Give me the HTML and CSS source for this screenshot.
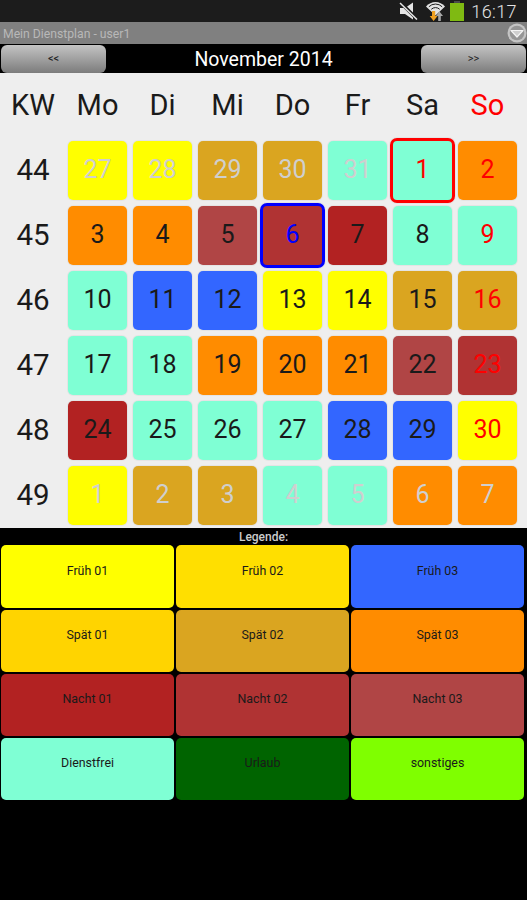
FILE: index.html
```html
<!DOCTYPE html>
<html lang="de">
<head>
  <meta charset="UTF-8" />
  <meta name="viewport" content="width=device-width, initial-scale=1.0"/>
  <title>Mein Dienstplan</title>
  <link rel="stylesheet" href="styles.css">
</head>
<body>
  <div class="container">
    <div class="status-bar">
      <svg class="icon-mute" width="20" height="18" viewBox="0 0 20 18">
        <path d="M1 6h5l8-5.500v17L6 12H1z" fill="#e6e6e6"/>
        <path d="M1 0l18 18" stroke="#1c1c1c" stroke-width="3.400"/>
        <path d="M1 1l17 16.500" stroke="#e6e6e6" stroke-width="1.500"/>
      </svg>
      <svg class="icon-wifi" width="19" height="20" viewBox="0 0 19 20">
        <path d="M0 5.500C5 -.5 14 -.5 19 5.500l-9.500 9z" fill="#e4e4e4"/>
        <path d="M2.800 5.800a9.500 9.500 0 0 1 13.400 0M5.300 8.300a6 6 0 0 1 8.400 0" fill="none" stroke="#1c1c1c" stroke-width="1"/>
        <path d="M6 10h3.200v5h2.300L7.600 20 3.700 15H6z" fill="#f0a020"/>
        <path d="M13.500 10.500l3.500 4.500h-2.200v5h-2.600v-5H10z" fill="#a8a8a8"/>
      </svg>
      <div class="battery"></div>
      <span class="clock">16:17</span>
    </div>

    <div class="title-bar">
      <span class="app-title">Mein Dienstplan - user1</span>
      <svg class="icon-menu" width="20" height="20" viewBox="0 0 20 20">
        <circle cx="10" cy="10" r="9.500" fill="#c4c4c4"/>
        <circle cx="10" cy="10" r="7.300" fill="#969696"/>
        <path d="M4 7.500h12l-6 6.500z" fill="#cfcfcf" stroke="#f4f4f4" stroke-width="1.200" stroke-linejoin="round"/>
      </svg>
    </div>

    <div class="month-nav">
      <button class="nav-btn">&lt;&lt;</button>
      <span class="month-label">November 2014</span>
      <button class="nav-btn">&gt;&gt;</button>
    </div>

    <div class="calendar">
      <div class="head">KW</div>
      <div class="head">Mo</div>
      <div class="head">Di</div>
      <div class="head">Mi</div>
      <div class="head">Do</div>
      <div class="head">Fr</div>
      <div class="head">Sa</div>
      <div class="head red">So</div>

      <div class="week">44</div>
      <div class="day fr1 muted">27</div>
      <div class="day fr1 muted">28</div>
      <div class="day sp2 muted">29</div>
      <div class="day sp2 muted">30</div>
      <div class="day frei muted">31</div>
      <div class="day frei red selected">1</div>
      <div class="day sp3 red">2</div>

      <div class="week">45</div>
      <div class="day sp3">3</div>
      <div class="day sp3">4</div>
      <div class="day na3">5</div>
      <div class="day na2 today">6</div>
      <div class="day na1">7</div>
      <div class="day frei">8</div>
      <div class="day frei red">9</div>

      <div class="week">46</div>
      <div class="day frei">10</div>
      <div class="day fr3">11</div>
      <div class="day fr3">12</div>
      <div class="day fr1">13</div>
      <div class="day fr1">14</div>
      <div class="day sp2">15</div>
      <div class="day sp2 red">16</div>

      <div class="week">47</div>
      <div class="day frei">17</div>
      <div class="day frei">18</div>
      <div class="day sp3">19</div>
      <div class="day sp3">20</div>
      <div class="day sp3">21</div>
      <div class="day na3">22</div>
      <div class="day na2 red">23</div>

      <div class="week">48</div>
      <div class="day na1">24</div>
      <div class="day frei">25</div>
      <div class="day frei">26</div>
      <div class="day frei">27</div>
      <div class="day fr3">28</div>
      <div class="day fr3">29</div>
      <div class="day fr1 red">30</div>

      <div class="week">49</div>
      <div class="day fr1 muted">1</div>
      <div class="day sp2 muted">2</div>
      <div class="day sp2 muted">3</div>
      <div class="day frei muted">4</div>
      <div class="day frei muted">5</div>
      <div class="day sp3 muted">6</div>
      <div class="day sp3 muted">7</div>
    </div>

    <div class="legend">
      <div class="legend-title">Legende:</div>
      <div class="legend-grid">
        <div class="legend-item fr1">Früh 01</div>
        <div class="legend-item fr2">Früh 02</div>
        <div class="legend-item fr3">Früh 03</div>
        <div class="legend-item sp1">Spät 01</div>
        <div class="legend-item sp2">Spät 02</div>
        <div class="legend-item sp3">Spät 03</div>
        <div class="legend-item na1">Nacht 01</div>
        <div class="legend-item na2">Nacht 02</div>
        <div class="legend-item na3">Nacht 03</div>
        <div class="legend-item frei">Dienstfrei</div>
        <div class="legend-item urlaub">Urlaub</div>
        <div class="legend-item sonst">sonstiges</div>
      </div>
    </div>
  </div>
</body>
</html>
```

FILE: styles.css
```css
* {
  margin: 0;
  padding: 0;
  box-sizing: border-box;
}

body, html {
  height: 100%;
  width: 100%;
  overflow: hidden;
  font-family: Roboto, 'Liberation Sans', sans-serif;
  background-color: #000;
}

.container {
  height: 900px;
  display: flex;
  flex-direction: column;
}

.status-bar {
  height: 22px;
  background-color: #1c1c1c;
  display: flex;
  align-items: center;
  justify-content: flex-end;
  padding-right: 10px;
}

.icon-mute {
  margin-right: 7px;
}

.icon-wifi {
  margin-right: 5px;
}

.battery {
  position: relative;
  width: 14px;
  height: 18px;
  margin: 2px 7px 0 0;
  background-color: #7fba12;
}

.battery::before {
  content: "";
  position: absolute;
  top: -2px;
  left: 4px;
  width: 6px;
  height: 2px;
  background-color: #4a4a4a;
}

.clock {
  color: #e4e4e4;
  font-size: 18px;
  font-weight: 300;
  letter-spacing: 0.4px;
}

.title-bar {
  height: 22px;
  background-color: #808080;
  display: flex;
  align-items: center;
  justify-content: space-between;
  padding-left: 3px;
}

.app-title {
  color: #b8b8b8;
  font-size: 12.200px;
  margin-top: 2px;
}

.month-nav {
  height: 29px;
  display: flex;
  align-items: center;
  justify-content: space-between;
  padding: 0 1px;
}

.nav-btn {
  width: 105px;
  height: 28px;
  border: none;
  border-radius: 6px;
  background: linear-gradient(#c4c4c4, #7c7c7c);
  color: #222;
  font-family: inherit;
  font-size: 11px;
}

.month-label {
  color: #fff;
  font-size: 19.500px;
  margin-top: 2px;
}

.calendar {
  height: 455px;
  background-color: #eeeeee;
  display: grid;
  grid-template-columns: 62px repeat(7, 59px);
  grid-template-rows: 62px repeat(6, 59px);
  column-gap: 6px;
  row-gap: 6px;
  padding-bottom: 3px;
  align-items: center;
  justify-items: center;
}

.head {
  font-size: 29px;
  color: #1a1a1a;
  margin-top: 2px;
}

.head:first-child,
.week {
  padding-left: 4px;
}

.week {
  font-size: 29.500px;
  color: #1a1a1a;
  padding-bottom: 2px;
}

.head.red,
.day.red {
  color: #ff0000;
}

.day {
  width: 59px;
  height: 59px;
  border-radius: 5px;
  display: flex;
  align-items: center;
  justify-content: center;
  padding-bottom: 3px;
  font-size: 25px;
  color: #1a1a1a;
  box-shadow: 0 0 0 1px rgba(0, 0, 0, 0.04);
}

.day.muted {
  color: #cfcfcf;
}

.day.selected,
.day.today {
  width: 65px;
  height: 65px;
  border: 3px solid #ff0000;
  border-radius: 7px;
}

.day.today {
  border-color: #0000ff;
  color: #0000ff;
}

.legend {
  flex: 1;
  background-color: #000;
}

.legend-title {
  height: 17px;
  color: #ccc;
  font-size: 12px;
  font-weight: 500;
  text-align: center;
  line-height: 18px;
}

.legend-grid {
  display: grid;
  grid-template-columns: repeat(3, 173px);
  grid-template-rows: 63px 62px 62px 62px;
  gap: 2px;
  padding-left: 1px;
}

.legend-item {
  border-radius: 5px;
  display: flex;
  align-items: center;
  justify-content: center;
  padding-bottom: 13px;
  font-size: 12.400px;
  color: #1a1a1a;
}

.fr1 { background-color: #ffff00; }
.fr2 { background-color: #ffdf00; }
.fr3 { background-color: #3366ff; }
.sp1 { background-color: #ffd400; }
.sp2 { background-color: #daa520; }
.sp3 { background-color: #ff8c00; }
.na1 { background-color: #b22222; }
.na2 { background-color: #b03333; }
.na3 { background-color: #b04545; }
.frei { background-color: #7fffd4; }
.urlaub { background-color: #006400; }
.sonst { background-color: #7fff00; }
```
